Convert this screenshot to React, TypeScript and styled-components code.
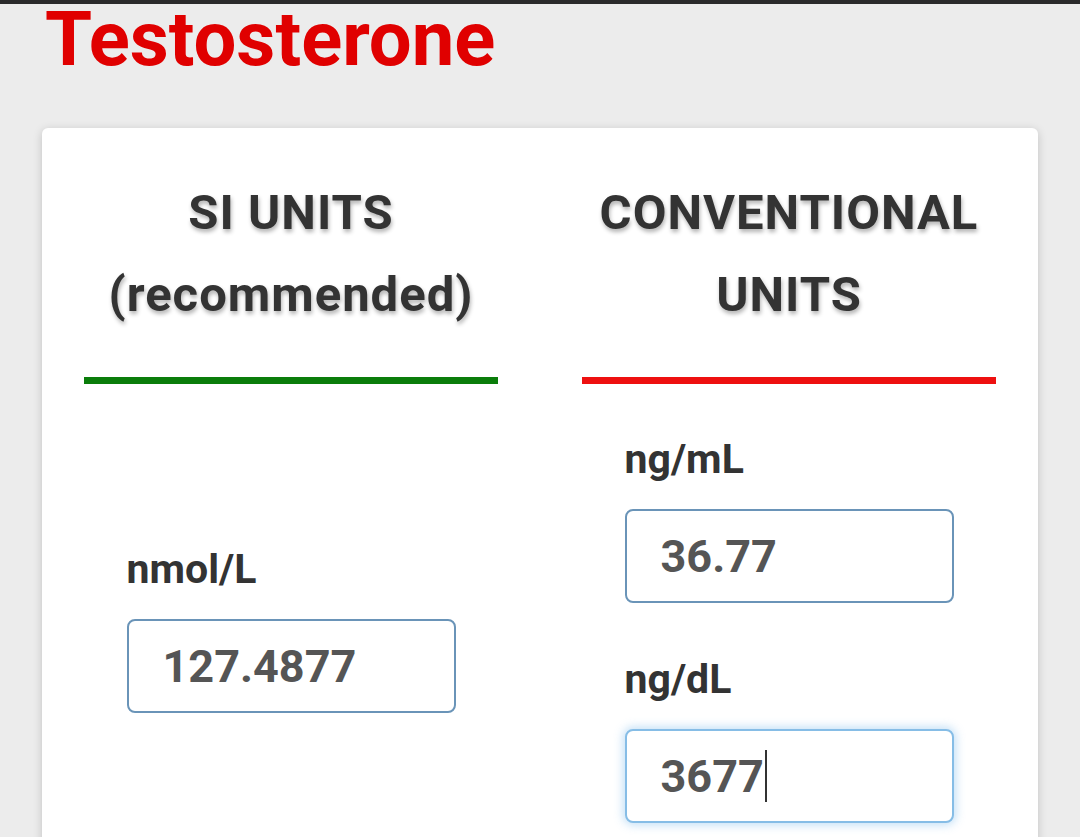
import React from 'react'
import styled, { createGlobalStyle } from 'styled-components'

const GlobalStyle = createGlobalStyle`
  html, body {
    margin: 0;
    padding: 0;
    background: #ececec;
    font-family: Roboto, "Liberation Sans", Arial, sans-serif;
    overflow: hidden;
  }
`

const StatusEdge = styled.div`
  height: 4px;
  background: #2a2a2b;
`

const Page = styled.main`
  padding: 0 42px;
`

const Title = styled.h1`
  margin: 0 0 54px;
  padding-left: 3px;
  font-size: 76px;
  line-height: 70px;
  font-weight: 700;
  color: #e00000;
`

const Card = styled.section`
  display: grid;
  grid-template-columns: 1fr 1fr;
  column-gap: 84px;
  padding: 44px 42px 0;
  min-height: 760px;
  background: #fff;
  border-radius: 6px;
  box-shadow: 0 2px 10px rgba(0, 0, 0, 0.18);
  align-content: start;
`

const UnitHeading = styled.h2`
  margin: 0;
  font-size: 49px;
  line-height: 82px;
  font-weight: 700;
  letter-spacing: 1px;
  text-align: center;
  color: #333;
  text-shadow: 1px 3px 4px rgba(0, 0, 0, 0.3);
`

const Rule = styled.div<{ $color: string }>`
  height: 7px;
  margin-top: 41px;
  background: ${p => p.$color};
`

const Fields = styled.div`
  align-self: center;
  justify-self: center;
  width: 329px;
  margin-top: 51px;
  display: flex;
  flex-direction: column;
`

const Label = styled.label`
  font-size: 41px;
  line-height: 48px;
  font-weight: 700;
  color: #333;
`

const ValueBox = styled.div<{ $focused?: boolean }>`
  box-sizing: border-box;
  display: flex;
  align-items: center;
  height: 94px;
  margin: 26px 0 52px;
  padding-left: 34px;
  border: 2px solid ${p => (p.$focused ? '#86bde6' : '#6a94b8')};
  border-radius: 8px;
  background: #fff;
  box-shadow: ${p => (p.$focused ? '0 0 10px 2px rgba(120, 185, 235, 0.45)' : 'none')};
  font-size: 45px;
  font-weight: 700;
  color: #555;

  &:last-child {
    margin-bottom: 0;
  }
`

const Caret = styled.span`
  display: inline-block;
  width: 2px;
  height: 52px;
  margin-left: 1px;
  background: #333;
`

type Field = { unit: string; value: string; focused?: boolean }

const siFields: Field[] = [{ unit: 'nmol/L', value: '127.4877' }]
const conventionalFields: Field[] = [
  { unit: 'ng/mL', value: '36.77' },
  { unit: 'ng/dL', value: '3677', focused: true },
]

function FieldList({ fields }: { fields: Field[] }) {
  return (
    <Fields>
      {fields.map(f => (
        <React.Fragment key={f.unit}>
          <Label>{f.unit}</Label>
          <ValueBox $focused={f.focused}>
            {f.value}
            {f.focused && <Caret />}
          </ValueBox>
        </React.Fragment>
      ))}
    </Fields>
  )
}

export default function App() {
  return (
    <>
      <GlobalStyle />
      <StatusEdge />
      <Page>
        <Title>Testosterone</Title>
        <Card>
          <UnitHeading>SI UNITS<br />(recommended)</UnitHeading>
          <UnitHeading>CONVENTIONAL<br />UNITS</UnitHeading>
          <Rule $color="#0a7d0a" />
          <Rule $color="#ee1010" />
          <FieldList fields={siFields} />
          <FieldList fields={conventionalFields} />
        </Card>
      </Page>
    </>
  )
}
